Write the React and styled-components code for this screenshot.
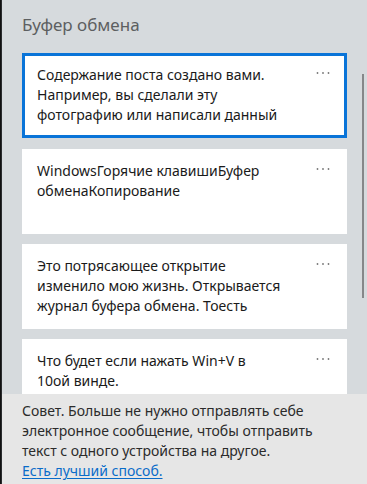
import React from "react";
import styled, { createGlobalStyle } from "styled-components";

const Global = createGlobalStyle`
  html, body { margin: 0; padding: 0; }
  body { background: #d6dadd; font-family: "Noto Sans", "Open Sans", sans-serif; }
  #root { width: 367px; height: 484px; overflow: hidden; }
`;

const Frame = styled.div`
  display: flex;
  width: 367px;
  height: 484px;
  background: #d6dadd;
`;

const EdgeStrip = styled.div`
  width: 2px;
  flex: none;
  background: #2a2c2e;
  border-left: 1px solid #111;
  box-sizing: border-box;
`;

const Main = styled.div`
  flex: 1;
  display: flex;
  flex-direction: column;
  min-width: 0;
`;

const Scroller = styled.div`
  height: 394px;
  flex: none;
  display: flex;
  overflow: hidden;
`;

const List = styled.div`
  width: 345px;
  flex: none;
  padding-left: 20px;
  box-sizing: border-box;
  display: flex;
  flex-direction: column;
`;

const Title = styled.h1`
  margin: 0;
  flex: none;
  padding-top: 13px;
  height: 53px;
  box-sizing: border-box;
  font-size: 17px;
  font-weight: 400;
  line-height: 24px;
  color: #5d5f61;
`;

const Card = styled.div`
  flex: none;
  height: 85px;
  margin-bottom: ${(p) => (p.$selected ? "11px" : "10px")};
  box-sizing: border-box;
  background: #ffffff;
  border: 3px solid ${(p) => (p.$selected ? "#0a74d8" : "#ffffff")};
  display: flex;
  align-items: flex-start;
  padding: 9px 12px 0 12px;
`;

const CardText = styled.p`
  margin: 0;
  flex: none;
  width: 244px;
  font-size: 14px;
  line-height: 20px;
  color: #1a1a1a;
`;

const Dots = styled.svg`
  flex: none;
  width: 14px;
  height: 4px;
  margin-top: 6px;
  margin-left: auto;
  margin-right: 2px;
`;

const Track = styled.div`
  flex: 1;
  padding-left: 15px;
  padding-top: 74px;
`;

const Thumb = styled.div`
  width: 2px;
  height: 224px;
  background: #868789;
`;

const Footer = styled.div`
  flex: 1;
  background: #e6e6e6;
  padding: 7px 20px 0 20px;
  font-size: 14px;
  line-height: 20px;
  color: #2b2b2b;
`;

const Tip = styled.p`
  margin: 0;
`;

const Link = styled.a`
  display: inline-block;
  color: #0a6cc9;
  text-decoration: underline;
  text-underline-offset: 2px;
`;

const MoreDots = () => (
  <Dots viewBox="0 0 14 4">
    <circle cx="1.5" cy="2" r="0.9" fill="#777" />
    <circle cx="7" cy="2" r="0.9" fill="#777" />
    <circle cx="12.5" cy="2" r="0.9" fill="#777" />
  </Dots>
);

const items = [
  "Содержание поста создано вами. Например, вы сделали эту фотографию или написали данный",
  "WindowsГорячие клавишиБуфер обменаКопирование",
  "Это потрясающее открытие изменило мою жизнь. Открывается журнал буфера обмена. Тоесть",
  "Что будет если нажать Win+V в 10ой винде.",
];

export default function App() {
  return (
    <>
      <Global />
      <Frame>
        <EdgeStrip />
        <Main>
          <Scroller>
            <List>
              <Title>Буфер обмена</Title>
              {items.map((t, i) => (
                <Card key={i} $selected={i === 0}>
                  <CardText>{t}</CardText>
                  <MoreDots />
                </Card>
              ))}
            </List>
            <Track>
              <Thumb />
            </Track>
          </Scroller>
          <Footer>
            <Tip>
              Совет. Больше не нужно отправлять себе электронное сообщение, чтобы отправить текст с одного устройства на другое.
            </Tip>
            <Link href="#">Есть лучший способ.</Link>
          </Footer>
        </Main>
      </Frame>
    </>
  );
}
